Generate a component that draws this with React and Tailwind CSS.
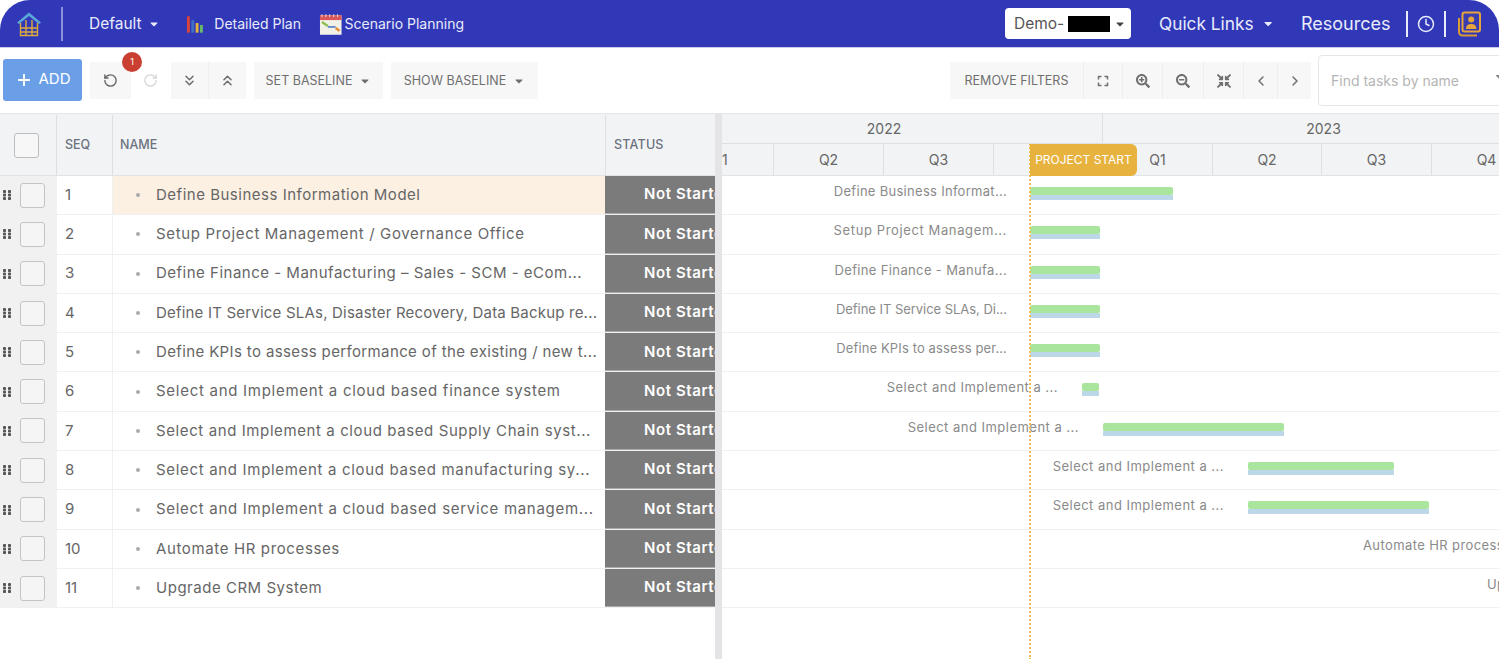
import React from "react";
import { RotateCcw, RotateCw, ChevronsDown, ChevronsUp, ChevronLeft, ChevronRight, Clock, Plus } from "lucide-react";
import { FaExpand, FaSearchPlus, FaSearchMinus, FaCompressArrowsAlt, FaCaretDown, FaFilter } from "react-icons/fa";

const tasks = [
  ["Define Business Information Model", "Define Business Informat...", 1007, 1030, 1173, null, "tracking-[0.510px]", "tracking-[0.290px]"],
  ["Setup Project Management / Governance Office", "Setup Project Managem...", 1007, 1030, 1100, null, "tracking-[0.660px]", "tracking-[0.620px]"],
  ["Define Finance - Manufacturing – Sales - SCM - eCom...", "Define Finance - Manufa...", 1007, 1030, 1100, null, "tracking-[0.500px]", "tracking-[0.360px]"],
  ["Define IT Service SLAs, Disaster Recovery, Data Backup re...", "Define IT Service SLAs, Di...", 1007, 1030, 1100, null, "tracking-[0.200px]", "tracking-[-0.040px]"],
  ["Define KPIs to assess performance of the existing / new t...", "Define KPIs to assess per...", 1007, 1030, 1100, null, "tracking-[0.370px]", "tracking-[0.120px]"],
  ["Select and Implement a cloud based finance system", "Select and Implement a ...", 1058, 1082, 1099, null, "tracking-[0.720px]", "tracking-[0.480px]"],
  ["Select and Implement a cloud based Supply Chain syst...", "Select and Implement a ...", 1079, 1103, 1284, null, "tracking-[0.600px]", "tracking-[0.480px]"],
  ["Select and Implement a cloud based manufacturing sy...", "Select and Implement a ...", 1224, 1248, 1394, null, "tracking-[0.680px]", "tracking-[0.480px]"],
  ["Select and Implement a cloud based service managem...", "Select and Implement a ...", 1224, 1248, 1429, null, "tracking-[0.700px]", "tracking-[0.480px]"],
  ["Automate HR processes", "Automate HR processes", null, null, null, 1363, "tracking-[0.630px]", "tracking-[0.400px]"],
  ["Upgrade CRM System", "Upgrade CRM System", null, null, null, 1487, "tracking-[0.520px]", "tracking-[0.400px]"],
];

const quarters = [[722, 774, "1", "justify-start"], [774, 884, "Q2"], [884, 994, "Q3"], [994, 1103, ""], [1103, 1213, "Q1"], [1213, 1322, "Q2"], [1322, 1432, "Q3"], [1432, 1542, "Q4"]];

function Logo() {
  return (
    <svg width="26" height="26" viewBox="0 0 26 26" fill="none">
      <path d="M1 11.500 13 1.500l12 10-2 1.500L13 5 3 13z" fill="#5aa7d8" />
      <path d="M4.500 12V24.500H21.500V12M4.500 17h17M4.500 21h17M10 9v15.500M16 9v15.500" stroke="#dcaa3c" strokeWidth="1.400" />
    </svg>
  );
}

function Bars() {
  return (
    <svg width="20" height="20" viewBox="0 0 20 20">
      <rect x="1" y="2" width="3" height="17" fill="#d8433b" />
      <rect x="5.500" y="6" width="3" height="13" fill="#3f6fc4" />
      <rect x="10" y="9" width="3" height="10" fill="#e4b13e" />
      <rect x="14.500" y="11" width="3" height="8" fill="#66b86a" />
    </svg>
  );
}

function Calendar() {
  return (
    <svg width="24" height="24" viewBox="0 0 24 24">
      <rect x="1" y="3" width="22" height="20" fill="#f2f1e8" />
      <rect x="1" y="3" width="22" height="5" fill="#d9575a" />
      <path d="M3 2v3M7 2v3M11 2v3M15 2v3M19 2v3" stroke="#ddd" strokeWidth="1" />
      <path d="M3 10l6 4" stroke="#8cc04f" strokeWidth="2.500" />
      <path d="M9 15h8" stroke="#3f6fc4" strokeWidth="1.500" />
      <path d="M17 16l4 3" stroke="#e58a2e" strokeWidth="2.500" />
    </svg>
  );
}

function Contact() {
  return (
    <svg width="24" height="26" viewBox="0 0 24 26" fill="none">
      <rect x="5.500" y="1.500" width="17.500" height="19" rx="2" stroke="#e6a43c" strokeWidth="2" fill="#3a3db0" />
      <path d="M2 7v14a3.500 3.500 0 0 0 3.500 3.500H20" stroke="#d99a3a" strokeWidth="2" />
      <circle cx="14.200" cy="8.500" r="3" fill="#e6a43c" />
      <path d="M9 18c0-4 2.300-5 5.200-5s5.200 1 5.200 5z" fill="#e6a43c" />
    </svg>
  );
}

function Grip() {
  return (
    <svg width="8" height="10" viewBox="0 0 8 10" fill="#555">
      {[0, 3.500, 7].map((y) => [0, 5].map((x) => <rect key={`${x}-${y}`} x={x} y={y} width="3" height="3" rx="0.800" />))}
    </svg>
  );
}

function Tool({ className = "", children }) {
  return <div className={`flex h-[37px] shrink-0 items-center justify-center bg-[#f7f7f7] text-[#6f6f6f] ${className}`}>{children}</div>;
}

export default function App() {
  return (
    <div className="relative h-[659px] w-[1499px] overflow-hidden bg-white font-['Inter','Liberation_Sans',sans-serif]">
      {/* Top nav */}
      <header className="flex h-[48px] items-center rounded-t-[30px] border-b border-b-[#c8cbea] bg-[#3038b8] text-[#e9ebfa]">
        <div className="ml-[16px] flex w-[26px] shrink-0 justify-center"><Logo /></div>
        <div className="ml-[19px] h-[34px] w-[2px] shrink-0 bg-[#8b90d8]" />
        <div className="ml-[26px] flex w-[71px] shrink-0 items-center gap-[6px] text-[15.500px]">Default <FaCaretDown size={12} /></div>
        <div className="ml-[26px] flex w-[115px] shrink-0 items-center gap-[9px] whitespace-nowrap text-[14px]"><Bars /> Detailed Plan</div>
        <div className="ml-[18px] flex w-[145px] shrink-0 items-center gap-[2px] whitespace-nowrap text-[14px]"><Calendar /> Scenario Planning</div>
        <div className="ml-[541px] flex h-[31px] w-[126px] shrink-0 items-center rounded-[4px] bg-white pl-[9px] text-[15.500px] text-[#555]">
          Demo-<span className="ml-[4px] h-[16px] w-[42px] bg-black" /><FaCaretDown size={12} className="ml-[4px] text-[#444]" />
        </div>
        <div className="ml-[28px] flex w-[114px] shrink-0 items-center gap-[9px] whitespace-nowrap text-[17.300px]">Quick Links <FaCaretDown size={13} /></div>
        <div className="ml-[28px] w-[90px] shrink-0 text-[18px]">Resources</div>
        <div className="ml-[15px] h-[26px] w-[2px] shrink-0 bg-[#e9ebfa]" />
        <Clock size={18} className="ml-[9px] shrink-0" strokeWidth={2} />
        <div className="ml-[9px] h-[26px] w-[2px] shrink-0 bg-[#e9ebfa]" />
        <div className="ml-[11px] shrink-0"><Contact /></div>
      </header>

      {/* Toolbar */}
      <div className="flex h-[65px] items-center pl-[3px]">
        <button className="mb-[2px] flex h-[42px] w-[79px] shrink-0 items-center justify-center gap-[6px] rounded-[3px] bg-[#6a9fe8] text-[15px] text-white">
          <Plus size={18} strokeWidth={2.500} /> ADD
        </button>
        <div className="relative ml-[8px] flex shrink-0">
          <Tool className="w-[41px]"><RotateCcw size={15} strokeWidth={2.200} className="text-[#666]" /></Tool>
          <span className="absolute left-[32px] top-[-10px] flex h-[20px] w-[20px] items-center justify-center rounded-full bg-[#c93f32] text-[9px] text-white">1</span>
          <div className="flex h-[37px] w-[39px] items-center justify-center text-[#d4d4d4]"><RotateCw size={15} /></div>
        </div>
        <Tool className="ml-[1px] w-[38px] border-r border-r-[#eeeeee]"><ChevronsDown size={17} strokeWidth={2.200} /></Tool>
        <Tool className="w-[37px]"><ChevronsUp size={17} strokeWidth={2.200} /></Tool>
        <Tool className="ml-[8px] w-[129px] gap-[7px] pt-px text-[12.500px]">SET BASELINE <FaCaretDown size={12} /></Tool>
        <Tool className="ml-[8px] w-[147px] gap-[7px] pt-px text-[12.500px]">SHOW BASELINE <FaCaretDown size={12} /></Tool>
        <Tool className="ml-[412px] w-[134px] border-r border-r-[#eeeeee] pt-px text-[12.500px]">REMOVE FILTERS</Tool>
        <Tool className="w-[39px] border-r border-r-[#eeeeee]"><FaExpand size={12} /></Tool>
        <Tool className="w-[40px] border-r border-r-[#eeeeee]"><FaSearchPlus size={14} /></Tool>
        <Tool className="w-[41px] border-r border-r-[#eeeeee]"><FaSearchMinus size={14} /></Tool>
        <Tool className="w-[40px] border-r border-r-[#eeeeee]"><FaCompressArrowsAlt size={14} /></Tool>
        <Tool className="w-[34px] border-r border-r-[#eeeeee]"><ChevronLeft size={16} strokeWidth={2.200} /></Tool>
        <Tool className="w-[33px]"><ChevronRight size={16} strokeWidth={2.200} /></Tool>
        <div className="ml-[7px] flex h-[51px] w-[190px] shrink-0 items-center whitespace-nowrap rounded-l-[4px] border border-[#e6e6e6] pl-[12px] text-[14px] text-[#b5b5b5]">
          Find tasks by name
          <FaFilter size={11} className="ml-[37px] shrink-0 text-[#888]" />
        </div>
      </div>

      {/* Body */}
      <div className="flex border-t border-t-[#e6e6e6]">
        {/* Grid */}
        <div className="w-[715px] shrink-0 overflow-hidden">
          <div className="flex h-[62px] items-center border-b border-b-[#e2e3e6] bg-[#f2f3f5] pt-px text-[12.500px] font-medium text-[#6b7280]">
            <div className="flex h-full w-[57px] items-center justify-center border-r border-r-[#dedfe2]">
              <span className="mr-[4px] h-[25px] w-[25px] rounded-[3px] border border-[#bdbdbd] bg-[#f7f7f7]" />
            </div>
            <div className="flex h-full w-[56px] items-center border-r border-r-[#dedfe2] pl-[8px]">SEQ</div>
            <div className="flex h-full w-[493px] items-center border-r border-r-[#dedfe2] pl-[7px]">NAME</div>
            <div className="flex h-full w-[109px] items-center pl-[8px] tracking-[0.200px]">STATUS</div>
          </div>
          {tasks.map((t, i) => (
            <div key={i} className="flex h-[39.300px] items-center border-b border-b-[#f0f0f0]">
              <div className="flex h-full w-[57px] items-center gap-[9px] bg-[#f1f1f1] pl-[3px]">
                <Grip />
                <span className="h-[25px] w-[25px] rounded-[3px] border border-[#c4c4c4] bg-[#f5f5f5]" />
              </div>
              <div className="flex h-full w-[55px] items-center pl-[8px] text-[15px] text-[#666]">{i + 1}</div>
              <div className={`flex h-full w-[493px] items-center border-l border-l-[#f0f0f0] pl-[23px] text-[15px] text-[#666] ${i === 0 ? "bg-[#fcf0e2]" : ""}`}>
                <span className="mr-[16px] h-[4px] w-[4px] shrink-0 rounded-full bg-[#aaa]" />
                <span className={`whitespace-nowrap ${t[6]}`}>{t[0]}</span>
              </div>
              <div className="flex h-full w-[110px] items-center overflow-hidden border-b border-b-[#aaa] bg-[#7b7b7b] pl-[39px] text-[15px] font-semibold tracking-[0.600px] whitespace-nowrap text-white">Not Started</div>
            </div>
          ))}
        </div>

        {/* Splitter */}
        <div className="h-[546px] w-[7px] shrink-0 bg-[#e4e4e6]" />

        {/* Gantt */}
        <div className="relative min-w-0 flex-1 overflow-hidden">
          <div className="h-[62px] w-[830px] border-b border-b-[#e2e3e6] bg-[#f2f3f5] text-[14px] text-[#666]">
            <div className="flex h-[30px] border-b border-b-[#dedfe2]">
              <div className="flex w-[381px] items-center justify-center border-r border-r-[#dedfe2] pr-[56px]">2022</div>
              <div className="flex w-[441px] items-center justify-center">2023</div>
            </div>
            <div className="flex h-[31px]">
              {quarters.map(([a, b, q, c]) => (
                <div key={a} className={`flex items-center border-r border-r-[#dedfe2] ${c || "justify-center"}`} style={{ width: b - a }}>{q}</div>
              ))}
            </div>
          </div>
          {tasks.map((t, i) => (
            <div key={i} className="relative h-[39.300px] border-b border-b-[#f0f0f0]">
              {t[2] ? (
                <>
                  <span className={`absolute top-[6px] text-right text-[13px] whitespace-nowrap text-[#8a8a8a] ${t[7]}`} style={{ right: 777 - (t[2] - 722) }}>{t[1]}</span>
                  <div className="absolute top-[11px] h-[8px] rounded-[2px] bg-[#a9e59c]" style={{ left: t[3] - 722, width: t[4] - t[3] }} />
                  <div className="absolute top-[19px] h-[5px] bg-[#bcd8e8]" style={{ left: t[3] - 722, width: t[4] - t[3] }} />
                </>
              ) : (
                <span className={`absolute top-[6px] text-[13px] whitespace-nowrap text-[#8a8a8a] ${t[7]}`} style={{ left: t[5] - 722 }}>{t[1]}</span>
              )}
            </div>
          ))}
          <div className="absolute top-[30px] bottom-0 left-[307px] border-l-2 border-dotted border-l-[#f5bd4a]" />
          <div className="absolute top-[30px] left-[308px] flex h-[32px] w-[107px] items-center justify-center rounded-r-[6px] bg-[#e8b23e] text-[12px] text-white">PROJECT START</div>
        </div>
      </div>
    </div>
  );
}
